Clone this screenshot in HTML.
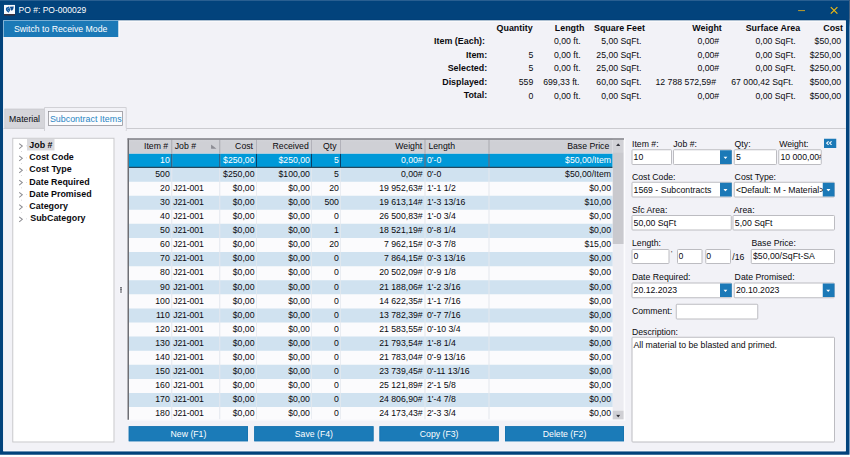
<!DOCTYPE html>
<html><head><meta charset="utf-8"><title>PO #: PO-000029</title>
<style>
html,body{margin:0;padding:0;}
body{width:850px;height:457px;overflow:hidden;background:#fff;position:relative;font-family:"Liberation Sans",sans-serif;}
#w{position:absolute;left:0;top:0;width:3400px;height:1828px;transform:scale(0.25);transform-origin:0 0;overflow:hidden;color:#0a0a0e;}
.b{position:absolute;display:block;box-sizing:border-box;}
.t{position:absolute;white-space:pre;line-height:48px;height:48px;font-family:"Liberation Sans",sans-serif;}
</style></head><body><div id="w">
<div class="b" style="left:0px;top:0px;width:3396.8px;height:1819.2px;background:#02437c;"></div>
<div class="b" style="left:0px;top:0px;width:3396.8px;height:3.6px;background:linear-gradient(#44749f,#0e4a83);"></div>
<div class="b" style="left:3396.8px;top:0px;width:3.2px;height:1818px;background:linear-gradient(#1c3c62 0,#1c3c62 4%,#5f88b4 6%,#5f88b4 100%);"></div>
<div class="b" style="left:13.2px;top:82px;width:3370px;height:1723.2px;background:#f2f2f7;border:3px solid #fcfcfe;"></div>
<svg class="b" style="left:16.4px;top:19.2px;width:44px;height:44px" viewBox="0 0 11 11"><rect x="0" y="0" width="11" height="9.6" fill="#f8f9fc"/><rect x="0" y="9.3" width="11" height="1.6" fill="#3a2a32"/><path d="M2 3.1L4.9 1.8L6.1 3.6L6 5.8L4.5 7.9L3 6.8L1.9 5.3Z" fill="#0e56a0"/><path d="M5.6 2L9.8 1.8L9.2 4.6L7.9 5.9L6.5 5.3L6.6 3.8Z" fill="#0d4d92"/><path d="M5 2L6.2 4.4M3 4.7L4.6 3.7M3.7 6.4L5.2 5.5" stroke="#e6eef7" stroke-width="0.45" fill="none"/></svg>
<span class="t" style="top:17px;font-size:34px;color:#fff;left:74.4px;">PO #: PO-000029</span>
<svg class="b" style="left:3180px;top:16px;width:200px;height:48px" viewBox="0 0 50 12"><path d="M3.1 6.6h6.9" stroke="#caa326" stroke-width="0.95" fill="none"/><path d="M35.8 3.1l6.6 6.6M42.4 3.1l-6.6 6.6" stroke="#f2bb10" stroke-width="1.15" fill="none"/></svg>
<div class="b" style="left:14px;top:78.8px;width:3368.8px;height:3.2px;background:#013a70;"></div>
<div class="b" style="left:14px;top:82px;width:3368.8px;height:4px;background:#fdfdfe;"></div>
<div class="b" style="left:473.2px;top:84px;width:5.6px;height:64.4px;background:#fbfbfd;"></div>
<div class="b" style="left:14px;top:82.4px;width:459.2px;height:65.2px;background:#1b79b7;"></div>
<div class="b" style="left:14px;top:82px;width:459.2px;height:2.4px;background:#8fc0e2;"></div>
<span class="t" style="top:92.3px;font-size:34.8px;color:#fff;left:56px;">Switch to Receive Mode</span>
<span class="t" style="top:86.5px;font-size:35.6px;font-weight:bold;right:1269.6px;">Quantity</span>
<span class="t" style="top:86.5px;font-size:35.6px;font-weight:bold;right:1062.4px;">Length</span>
<span class="t" style="top:86.5px;font-size:35.6px;font-weight:bold;left:2376px;">Square Feet</span>
<span class="t" style="top:86.5px;font-size:35.6px;font-weight:bold;right:512.8px;">Weight</span>
<span class="t" style="top:86.5px;font-size:35.6px;font-weight:bold;right:199.2px;">Surface Area</span>
<span class="t" style="top:86.5px;font-size:35.6px;font-weight:bold;right:28px;">Cost</span>
<span class="t" style="top:140.1px;font-size:35.6px;font-weight:bold;right:1460px;">Item (Each):</span>
<span class="t" style="top:140.3px;font-size:34.8px;right:1077.6px;">0,00 ft.</span>
<span class="t" style="top:140.3px;font-size:34.8px;right:834.8px;">5,00 SqFt.</span>
<span class="t" style="top:140.3px;font-size:34.8px;right:523.2px;">0,00#</span>
<span class="t" style="top:140.3px;font-size:34.8px;right:217.6px;">0,00 SqFt.</span>
<span class="t" style="top:140.3px;font-size:34.8px;right:35.2px;">$50,00</span>
<span class="t" style="top:194.5px;font-size:35.6px;font-weight:bold;right:1451.2px;">Item:</span>
<span class="t" style="top:194.7px;font-size:34.8px;right:1266.8px;">5</span>
<span class="t" style="top:194.7px;font-size:34.8px;right:1077.6px;">0,00 ft.</span>
<span class="t" style="top:194.7px;font-size:34.8px;right:834.8px;">25,00 SqFt.</span>
<span class="t" style="top:194.7px;font-size:34.8px;right:523.2px;">0,00#</span>
<span class="t" style="top:194.7px;font-size:34.8px;right:217.6px;">0,00 SqFt.</span>
<span class="t" style="top:194.7px;font-size:34.8px;right:35.2px;">$250,00</span>
<span class="t" style="top:248.5px;font-size:35.6px;font-weight:bold;right:1451.2px;">Selected:</span>
<span class="t" style="top:248.7px;font-size:34.8px;right:1266.8px;">5</span>
<span class="t" style="top:248.7px;font-size:34.8px;right:1077.6px;">0,00 ft.</span>
<span class="t" style="top:248.7px;font-size:34.8px;right:834.8px;">25,00 SqFt.</span>
<span class="t" style="top:248.7px;font-size:34.8px;right:523.2px;">0,00#</span>
<span class="t" style="top:248.7px;font-size:34.8px;right:217.6px;">0,00 SqFt.</span>
<span class="t" style="top:248.7px;font-size:34.8px;right:35.2px;">$250,00</span>
<span class="t" style="top:302.9px;font-size:35.6px;font-weight:bold;right:1451.2px;">Displayed:</span>
<span class="t" style="top:303.1px;font-size:34.8px;right:1266.8px;">559</span>
<span class="t" style="top:303.1px;font-size:34.8px;right:1082.4px;">699,33 ft.</span>
<span class="t" style="top:303.1px;font-size:34.8px;right:834.8px;">60,00 SqFt.</span>
<span class="t" style="top:303.1px;font-size:34.8px;right:536px;">12 788 572,59#</span>
<span class="t" style="top:303.1px;font-size:34.8px;right:227.6px;">67 000,42 SqFt.</span>
<span class="t" style="top:303.1px;font-size:34.8px;right:35.2px;">$500,00</span>
<span class="t" style="top:357.3px;font-size:35.6px;font-weight:bold;right:1451.2px;">Total:</span>
<span class="t" style="top:357.5px;font-size:34.8px;right:1266.8px;">0</span>
<span class="t" style="top:357.5px;font-size:34.8px;right:1077.6px;">0,00 ft.</span>
<span class="t" style="top:357.5px;font-size:34.8px;right:834.8px;">0,00 SqFt.</span>
<span class="t" style="top:357.5px;font-size:34.8px;right:523.2px;">0,00#</span>
<span class="t" style="top:357.5px;font-size:34.8px;right:217.6px;">0,00 SqFt.</span>
<span class="t" style="top:357.5px;font-size:34.8px;right:35.2px;">$500,00</span>
<div class="b" style="left:18.4px;top:435.2px;width:160.8px;height:79.2px;background:#d5d5da;border:3px solid #c9c9ce;"></div>
<div class="b" style="left:14px;top:512.4px;width:3368.8px;height:3.6px;background:#cbcbd0;"></div>
<div class="b" style="left:177.2px;top:428.8px;width:328.8px;height:95.2px;background:#f2f2f7;border:3px solid #c6c6cb;"></div>
<div class="b" style="left:180.2px;top:512px;width:322.8px;height:14px;background:#f2f2f7;"></div>
<div class="b" style="left:192.4px;top:444px;width:298.8px;height:58.8px;background:#fcfcfe;border:3px solid #8c8c92;"></div>
<span class="t" style="top:453.1px;font-size:34.8px;left:36.4px;">Material</span>
<span class="t" style="top:450.9px;font-size:35.6px;color:#2a86c4;left:199.6px;">Subcontract Items</span>
<div class="b" style="left:49.2px;top:551.2px;width:409.2px;height:1218.8px;background:#fff;border:4px solid #c6c6ca;"></div>
<div class="b" style="left:107.6px;top:556px;width:110.8px;height:45.6px;background:#d9d9dd;"></div>
<svg class="b" style="left:73.6px;top:571.2px;width:20px;height:28px" viewBox="0 0 5 7"><path d="M0.7 0.8L3.8 3.3L0.7 5.8" stroke="#8e8e93" stroke-width="1.05" fill="none"/></svg>
<div class="b" style="left:105.2px;top:582px;width:2.8px;height:2.8px;background:#c3c3c8;"></div>
<div class="b" style="left:84px;top:604px;width:2.8px;height:2.8px;background:#b9b9be;"></div>
<span class="t" style="top:555.7px;font-size:35.6px;font-weight:bold;left:117.2px;">Job #</span>
<svg class="b" style="left:73.6px;top:619.6px;width:20px;height:28px" viewBox="0 0 5 7"><path d="M0.7 0.8L3.8 3.3L0.7 5.8" stroke="#8e8e93" stroke-width="1.05" fill="none"/></svg>
<div class="b" style="left:105.2px;top:630.4px;width:2.8px;height:2.8px;background:#c3c3c8;"></div>
<div class="b" style="left:84px;top:652.4px;width:2.8px;height:2.8px;background:#b9b9be;"></div>
<span class="t" style="top:604.1px;font-size:35.6px;font-weight:bold;left:117.2px;">Cost Code</span>
<svg class="b" style="left:73.6px;top:668.4px;width:20px;height:28px" viewBox="0 0 5 7"><path d="M0.7 0.8L3.8 3.3L0.7 5.8" stroke="#8e8e93" stroke-width="1.05" fill="none"/></svg>
<div class="b" style="left:105.2px;top:679.2px;width:2.8px;height:2.8px;background:#c3c3c8;"></div>
<div class="b" style="left:84px;top:701.2px;width:2.8px;height:2.8px;background:#b9b9be;"></div>
<span class="t" style="top:652.9px;font-size:35.6px;font-weight:bold;left:117.2px;">Cost Type</span>
<svg class="b" style="left:73.6px;top:717.2px;width:20px;height:28px" viewBox="0 0 5 7"><path d="M0.7 0.8L3.8 3.3L0.7 5.8" stroke="#8e8e93" stroke-width="1.05" fill="none"/></svg>
<div class="b" style="left:105.2px;top:728px;width:2.8px;height:2.8px;background:#c3c3c8;"></div>
<div class="b" style="left:84px;top:750px;width:2.8px;height:2.8px;background:#b9b9be;"></div>
<span class="t" style="top:701.7px;font-size:35.6px;font-weight:bold;left:117.2px;">Date Required</span>
<svg class="b" style="left:73.6px;top:766px;width:20px;height:28px" viewBox="0 0 5 7"><path d="M0.7 0.8L3.8 3.3L0.7 5.8" stroke="#8e8e93" stroke-width="1.05" fill="none"/></svg>
<div class="b" style="left:105.2px;top:776.8px;width:2.8px;height:2.8px;background:#c3c3c8;"></div>
<div class="b" style="left:84px;top:798.8px;width:2.8px;height:2.8px;background:#b9b9be;"></div>
<span class="t" style="top:750.5px;font-size:35.6px;font-weight:bold;left:117.2px;">Date Promised</span>
<svg class="b" style="left:73.6px;top:814.8px;width:20px;height:28px" viewBox="0 0 5 7"><path d="M0.7 0.8L3.8 3.3L0.7 5.8" stroke="#8e8e93" stroke-width="1.05" fill="none"/></svg>
<div class="b" style="left:105.2px;top:825.6px;width:2.8px;height:2.8px;background:#c3c3c8;"></div>
<div class="b" style="left:84px;top:847.6px;width:2.8px;height:2.8px;background:#b9b9be;"></div>
<span class="t" style="top:799.3px;font-size:35.6px;font-weight:bold;left:117.2px;">Category</span>
<svg class="b" style="left:73.6px;top:863.6px;width:20px;height:28px" viewBox="0 0 5 7"><path d="M0.7 0.8L3.8 3.3L0.7 5.8" stroke="#8e8e93" stroke-width="1.05" fill="none"/></svg>
<div class="b" style="left:105.2px;top:874.4px;width:2.8px;height:2.8px;background:#c3c3c8;"></div>
<span class="t" style="top:848.1px;font-size:35.6px;font-weight:bold;left:120.8px;">SubCategory</span>
<div class="b" style="left:477.2px;top:1146px;width:14px;height:27.6px;background:#f8f8fb;"></div>
<div class="b" style="left:480px;top:1149.2px;width:8.4px;height:4.8px;background:#4e4e58;"></div>
<div class="b" style="left:480px;top:1157.4px;width:8.4px;height:4.8px;background:#4e4e58;"></div>
<div class="b" style="left:480px;top:1165.6px;width:8.4px;height:4.8px;background:#4e4e58;"></div>
<div class="b" style="left:513.2px;top:556px;width:1982px;height:1121.6px;background:#fbfbfd;"></div>
<div class="b" style="left:513.2px;top:555.2px;width:1938px;height:58.4px;background:linear-gradient(#d4d5da 0,#cfd0d5 22%,#cfd0d5 100%);"></div>
<div class="b" style="left:513.2px;top:613.6px;width:1938px;height:56.4px;background:#0099d8;"></div>
<div class="b" style="left:513.2px;top:670px;width:1938px;height:56.6px;background:#d0e2f0;"></div>
<div class="b" style="left:513.2px;top:782.7px;width:1938px;height:56.6px;background:#d0e2f0;"></div>
<div class="b" style="left:513.2px;top:895.4px;width:1938px;height:56.6px;background:#d0e2f0;"></div>
<div class="b" style="left:513.2px;top:1008.1px;width:1938px;height:56.6px;background:#d0e2f0;"></div>
<div class="b" style="left:513.2px;top:1120.8px;width:1938px;height:56.6px;background:#d0e2f0;"></div>
<div class="b" style="left:513.2px;top:1233.6px;width:1938px;height:56.6px;background:#d0e2f0;"></div>
<div class="b" style="left:513.2px;top:1346.3px;width:1938px;height:56.6px;background:#d0e2f0;"></div>
<div class="b" style="left:513.2px;top:1459px;width:1938px;height:56.6px;background:#d0e2f0;"></div>
<div class="b" style="left:513.2px;top:1571.7px;width:1938px;height:56.6px;background:#d0e2f0;"></div>
<div class="b" style="left:685.4px;top:613.6px;width:3.6px;height:1064px;background:#e4e8ee;"></div>
<div class="b" style="left:685.4px;top:558.8px;width:3.6px;height:54.8px;background:#a9a9b0;"></div>
<div class="b" style="left:685.2px;top:613.6px;width:4px;height:56.4px;background:#0a3f66;"></div>
<div class="b" style="left:877.4px;top:613.6px;width:3.6px;height:1064px;background:#e4e8ee;"></div>
<div class="b" style="left:877.4px;top:558.8px;width:3.6px;height:54.8px;background:#a9a9b0;"></div>
<div class="b" style="left:877.2px;top:613.6px;width:4px;height:56.4px;background:#0a3f66;"></div>
<div class="b" style="left:1024.6px;top:613.6px;width:3.6px;height:1064px;background:#e4e8ee;"></div>
<div class="b" style="left:1024.6px;top:558.8px;width:3.6px;height:54.8px;background:#a9a9b0;"></div>
<div class="b" style="left:1024.4px;top:613.6px;width:4px;height:56.4px;background:#0a3f66;"></div>
<div class="b" style="left:1244.6px;top:613.6px;width:3.6px;height:1064px;background:#e4e8ee;"></div>
<div class="b" style="left:1244.6px;top:558.8px;width:3.6px;height:54.8px;background:#a9a9b0;"></div>
<div class="b" style="left:1244.4px;top:613.6px;width:4px;height:56.4px;background:#0a3f66;"></div>
<div class="b" style="left:1360.6px;top:613.6px;width:3.6px;height:1064px;background:#e4e8ee;"></div>
<div class="b" style="left:1360.6px;top:558.8px;width:3.6px;height:54.8px;background:#a9a9b0;"></div>
<div class="b" style="left:1360.4px;top:613.6px;width:4px;height:56.4px;background:#0a3f66;"></div>
<div class="b" style="left:1698.2px;top:613.6px;width:3.6px;height:1064px;background:#e4e8ee;"></div>
<div class="b" style="left:1698.2px;top:558.8px;width:3.6px;height:54.8px;background:#a9a9b0;"></div>
<div class="b" style="left:1698px;top:613.6px;width:4px;height:56.4px;background:#0a3f66;"></div>
<div class="b" style="left:1954.2px;top:613.6px;width:3.6px;height:1064px;background:#e4e8ee;"></div>
<div class="b" style="left:1954.2px;top:558.8px;width:3.6px;height:54.8px;background:#a9a9b0;"></div>
<div class="b" style="left:1954px;top:613.6px;width:4px;height:56.4px;background:#0a3f66;"></div>
<div class="b" style="left:513.2px;top:611.6px;width:1938px;height:2.4px;background:#e2dadf;"></div>
<div class="b" style="left:513.2px;top:667.2px;width:1938px;height:4.8px;background:#27485c;"></div>
<span class="t" style="top:614.3px;font-size:34.8px;color:#fff;right:2720.8px;">10</span>
<span class="t" style="top:614.3px;font-size:34.8px;color:#fff;right:2382px;">$250,00</span>
<span class="t" style="top:614.3px;font-size:34.8px;color:#fff;right:2160.4px;">$250,00</span>
<span class="t" style="top:614.3px;font-size:34.8px;color:#fff;right:2044.4px;">5</span>
<span class="t" style="top:614.3px;font-size:34.8px;color:#fff;right:1709.2px;">0,00#</span>
<span class="t" style="top:614.3px;font-size:34.8px;color:#fff;left:1708px;">0'-0</span>
<span class="t" style="top:614.3px;font-size:34.8px;color:#fff;right:956px;">$50,00/Item</span>
<span class="t" style="top:670.7px;font-size:34.8px;right:2720.8px;">500</span>
<span class="t" style="top:670.7px;font-size:34.8px;right:2382px;">$250,00</span>
<span class="t" style="top:670.7px;font-size:34.8px;right:2160.4px;">$100,00</span>
<span class="t" style="top:670.7px;font-size:34.8px;right:2044.4px;">5</span>
<span class="t" style="top:670.7px;font-size:34.8px;right:1709.2px;">0,00#</span>
<span class="t" style="top:670.7px;font-size:34.8px;left:1708px;">0'-0</span>
<span class="t" style="top:670.7px;font-size:34.8px;right:956px;">$50,00/Item</span>
<span class="t" style="top:727.1px;font-size:34.8px;right:2720.8px;">20</span>
<span class="t" style="top:727.1px;font-size:34.8px;left:692.8px;letter-spacing:-0.6px;">J21-001</span>
<span class="t" style="top:727.1px;font-size:34.8px;right:2382px;">$0,00</span>
<span class="t" style="top:727.1px;font-size:34.8px;right:2160.4px;">$0,00</span>
<span class="t" style="top:727.1px;font-size:34.8px;right:2044.4px;">20</span>
<span class="t" style="top:727.1px;font-size:34.8px;right:1709.2px;">19 952,63#</span>
<span class="t" style="top:727.1px;font-size:34.8px;left:1708px;">1'-1 1/2</span>
<span class="t" style="top:727.1px;font-size:34.8px;right:956px;">$0,00</span>
<span class="t" style="top:783.4px;font-size:34.8px;right:2720.8px;">30</span>
<span class="t" style="top:783.4px;font-size:34.8px;left:692.8px;letter-spacing:-0.6px;">J21-001</span>
<span class="t" style="top:783.4px;font-size:34.8px;right:2382px;">$0,00</span>
<span class="t" style="top:783.4px;font-size:34.8px;right:2160.4px;">$0,00</span>
<span class="t" style="top:783.4px;font-size:34.8px;right:2044.4px;">500</span>
<span class="t" style="top:783.4px;font-size:34.8px;right:1709.2px;">19 613,14#</span>
<span class="t" style="top:783.4px;font-size:34.8px;left:1708px;">1'-3 13/16</span>
<span class="t" style="top:783.4px;font-size:34.8px;right:956px;">$10,00</span>
<span class="t" style="top:839.8px;font-size:34.8px;right:2720.8px;">40</span>
<span class="t" style="top:839.8px;font-size:34.8px;left:692.8px;letter-spacing:-0.6px;">J21-001</span>
<span class="t" style="top:839.8px;font-size:34.8px;right:2382px;">$0,00</span>
<span class="t" style="top:839.8px;font-size:34.8px;right:2160.4px;">$0,00</span>
<span class="t" style="top:839.8px;font-size:34.8px;right:2044.4px;">0</span>
<span class="t" style="top:839.8px;font-size:34.8px;right:1709.2px;">26 500,83#</span>
<span class="t" style="top:839.8px;font-size:34.8px;left:1708px;">1'-0 3/4</span>
<span class="t" style="top:839.8px;font-size:34.8px;right:956px;">$0,00</span>
<span class="t" style="top:896.1px;font-size:34.8px;right:2720.8px;">50</span>
<span class="t" style="top:896.1px;font-size:34.8px;left:692.8px;letter-spacing:-0.6px;">J21-001</span>
<span class="t" style="top:896.1px;font-size:34.8px;right:2382px;">$0,00</span>
<span class="t" style="top:896.1px;font-size:34.8px;right:2160.4px;">$0,00</span>
<span class="t" style="top:896.1px;font-size:34.8px;right:2044.4px;">1</span>
<span class="t" style="top:896.1px;font-size:34.8px;right:1709.2px;">18 521,19#</span>
<span class="t" style="top:896.1px;font-size:34.8px;left:1708px;">0'-8 1/4</span>
<span class="t" style="top:896.1px;font-size:34.8px;right:956px;">$0,00</span>
<span class="t" style="top:952.5px;font-size:34.8px;right:2720.8px;">60</span>
<span class="t" style="top:952.5px;font-size:34.8px;left:692.8px;letter-spacing:-0.6px;">J21-001</span>
<span class="t" style="top:952.5px;font-size:34.8px;right:2382px;">$0,00</span>
<span class="t" style="top:952.5px;font-size:34.8px;right:2160.4px;">$0,00</span>
<span class="t" style="top:952.5px;font-size:34.8px;right:2044.4px;">20</span>
<span class="t" style="top:952.5px;font-size:34.8px;right:1709.2px;">7 962,15#</span>
<span class="t" style="top:952.5px;font-size:34.8px;left:1708px;">0'-3 7/8</span>
<span class="t" style="top:952.5px;font-size:34.8px;right:956px;">$15,00</span>
<span class="t" style="top:1008.9px;font-size:34.8px;right:2720.8px;">70</span>
<span class="t" style="top:1008.9px;font-size:34.8px;left:692.8px;letter-spacing:-0.6px;">J21-001</span>
<span class="t" style="top:1008.9px;font-size:34.8px;right:2382px;">$0,00</span>
<span class="t" style="top:1008.9px;font-size:34.8px;right:2160.4px;">$0,00</span>
<span class="t" style="top:1008.9px;font-size:34.8px;right:2044.4px;">0</span>
<span class="t" style="top:1008.9px;font-size:34.8px;right:1709.2px;">7 864,15#</span>
<span class="t" style="top:1008.9px;font-size:34.8px;left:1708px;">0'-3 13/16</span>
<span class="t" style="top:1008.9px;font-size:34.8px;right:956px;">$0,00</span>
<span class="t" style="top:1065.2px;font-size:34.8px;right:2720.8px;">80</span>
<span class="t" style="top:1065.2px;font-size:34.8px;left:692.8px;letter-spacing:-0.6px;">J21-001</span>
<span class="t" style="top:1065.2px;font-size:34.8px;right:2382px;">$0,00</span>
<span class="t" style="top:1065.2px;font-size:34.8px;right:2160.4px;">$0,00</span>
<span class="t" style="top:1065.2px;font-size:34.8px;right:2044.4px;">0</span>
<span class="t" style="top:1065.2px;font-size:34.8px;right:1709.2px;">20 502,09#</span>
<span class="t" style="top:1065.2px;font-size:34.8px;left:1708px;">0'-9 1/8</span>
<span class="t" style="top:1065.2px;font-size:34.8px;right:956px;">$0,00</span>
<span class="t" style="top:1121.6px;font-size:34.8px;right:2720.8px;">90</span>
<span class="t" style="top:1121.6px;font-size:34.8px;left:692.8px;letter-spacing:-0.6px;">J21-001</span>
<span class="t" style="top:1121.6px;font-size:34.8px;right:2382px;">$0,00</span>
<span class="t" style="top:1121.6px;font-size:34.8px;right:2160.4px;">$0,00</span>
<span class="t" style="top:1121.6px;font-size:34.8px;right:2044.4px;">0</span>
<span class="t" style="top:1121.6px;font-size:34.8px;right:1709.2px;">21 188,06#</span>
<span class="t" style="top:1121.6px;font-size:34.8px;left:1708px;">1'-2 3/16</span>
<span class="t" style="top:1121.6px;font-size:34.8px;right:956px;">$0,00</span>
<span class="t" style="top:1177.9px;font-size:34.8px;right:2720.8px;">100</span>
<span class="t" style="top:1177.9px;font-size:34.8px;left:692.8px;letter-spacing:-0.6px;">J21-001</span>
<span class="t" style="top:1177.9px;font-size:34.8px;right:2382px;">$0,00</span>
<span class="t" style="top:1177.9px;font-size:34.8px;right:2160.4px;">$0,00</span>
<span class="t" style="top:1177.9px;font-size:34.8px;right:2044.4px;">0</span>
<span class="t" style="top:1177.9px;font-size:34.8px;right:1709.2px;">14 622,35#</span>
<span class="t" style="top:1177.9px;font-size:34.8px;left:1708px;">1'-1 7/16</span>
<span class="t" style="top:1177.9px;font-size:34.8px;right:956px;">$0,00</span>
<span class="t" style="top:1234.3px;font-size:34.8px;right:2720.8px;">110</span>
<span class="t" style="top:1234.3px;font-size:34.8px;left:692.8px;letter-spacing:-0.6px;">J21-001</span>
<span class="t" style="top:1234.3px;font-size:34.8px;right:2382px;">$0,00</span>
<span class="t" style="top:1234.3px;font-size:34.8px;right:2160.4px;">$0,00</span>
<span class="t" style="top:1234.3px;font-size:34.8px;right:2044.4px;">0</span>
<span class="t" style="top:1234.3px;font-size:34.8px;right:1709.2px;">13 782,39#</span>
<span class="t" style="top:1234.3px;font-size:34.8px;left:1708px;">0'-7 7/16</span>
<span class="t" style="top:1234.3px;font-size:34.8px;right:956px;">$0,00</span>
<span class="t" style="top:1290.7px;font-size:34.8px;right:2720.8px;">120</span>
<span class="t" style="top:1290.7px;font-size:34.8px;left:692.8px;letter-spacing:-0.6px;">J21-001</span>
<span class="t" style="top:1290.7px;font-size:34.8px;right:2382px;">$0,00</span>
<span class="t" style="top:1290.7px;font-size:34.8px;right:2160.4px;">$0,00</span>
<span class="t" style="top:1290.7px;font-size:34.8px;right:2044.4px;">0</span>
<span class="t" style="top:1290.7px;font-size:34.8px;right:1709.2px;">21 583,55#</span>
<span class="t" style="top:1290.7px;font-size:34.8px;left:1708px;">0'-10 3/4</span>
<span class="t" style="top:1290.7px;font-size:34.8px;right:956px;">$0,00</span>
<span class="t" style="top:1347px;font-size:34.8px;right:2720.8px;">130</span>
<span class="t" style="top:1347px;font-size:34.8px;left:692.8px;letter-spacing:-0.6px;">J21-001</span>
<span class="t" style="top:1347px;font-size:34.8px;right:2382px;">$0,00</span>
<span class="t" style="top:1347px;font-size:34.8px;right:2160.4px;">$0,00</span>
<span class="t" style="top:1347px;font-size:34.8px;right:2044.4px;">0</span>
<span class="t" style="top:1347px;font-size:34.8px;right:1709.2px;">21 793,54#</span>
<span class="t" style="top:1347px;font-size:34.8px;left:1708px;">1'-8 1/4</span>
<span class="t" style="top:1347px;font-size:34.8px;right:956px;">$0,00</span>
<span class="t" style="top:1403.4px;font-size:34.8px;right:2720.8px;">140</span>
<span class="t" style="top:1403.4px;font-size:34.8px;left:692.8px;letter-spacing:-0.6px;">J21-001</span>
<span class="t" style="top:1403.4px;font-size:34.8px;right:2382px;">$0,00</span>
<span class="t" style="top:1403.4px;font-size:34.8px;right:2160.4px;">$0,00</span>
<span class="t" style="top:1403.4px;font-size:34.8px;right:2044.4px;">0</span>
<span class="t" style="top:1403.4px;font-size:34.8px;right:1709.2px;">21 783,04#</span>
<span class="t" style="top:1403.4px;font-size:34.8px;left:1708px;">0'-9 13/16</span>
<span class="t" style="top:1403.4px;font-size:34.8px;right:956px;">$0,00</span>
<span class="t" style="top:1459.7px;font-size:34.8px;right:2720.8px;">150</span>
<span class="t" style="top:1459.7px;font-size:34.8px;left:692.8px;letter-spacing:-0.6px;">J21-001</span>
<span class="t" style="top:1459.7px;font-size:34.8px;right:2382px;">$0,00</span>
<span class="t" style="top:1459.7px;font-size:34.8px;right:2160.4px;">$0,00</span>
<span class="t" style="top:1459.7px;font-size:34.8px;right:2044.4px;">0</span>
<span class="t" style="top:1459.7px;font-size:34.8px;right:1709.2px;">23 739,45#</span>
<span class="t" style="top:1459.7px;font-size:34.8px;left:1708px;">0'-11 13/16</span>
<span class="t" style="top:1459.7px;font-size:34.8px;right:956px;">$0,00</span>
<span class="t" style="top:1516.1px;font-size:34.8px;right:2720.8px;">160</span>
<span class="t" style="top:1516.1px;font-size:34.8px;left:692.8px;letter-spacing:-0.6px;">J21-001</span>
<span class="t" style="top:1516.1px;font-size:34.8px;right:2382px;">$0,00</span>
<span class="t" style="top:1516.1px;font-size:34.8px;right:2160.4px;">$0,00</span>
<span class="t" style="top:1516.1px;font-size:34.8px;right:2044.4px;">0</span>
<span class="t" style="top:1516.1px;font-size:34.8px;right:1709.2px;">25 121,89#</span>
<span class="t" style="top:1516.1px;font-size:34.8px;left:1708px;">2'-1 5/8</span>
<span class="t" style="top:1516.1px;font-size:34.8px;right:956px;">$0,00</span>
<span class="t" style="top:1572.5px;font-size:34.8px;right:2720.8px;">170</span>
<span class="t" style="top:1572.5px;font-size:34.8px;left:692.8px;letter-spacing:-0.6px;">J21-001</span>
<span class="t" style="top:1572.5px;font-size:34.8px;right:2382px;">$0,00</span>
<span class="t" style="top:1572.5px;font-size:34.8px;right:2160.4px;">$0,00</span>
<span class="t" style="top:1572.5px;font-size:34.8px;right:2044.4px;">0</span>
<span class="t" style="top:1572.5px;font-size:34.8px;right:1709.2px;">24 806,90#</span>
<span class="t" style="top:1572.5px;font-size:34.8px;left:1708px;">1'-4 7/8</span>
<span class="t" style="top:1572.5px;font-size:34.8px;right:956px;">$0,00</span>
<span class="t" style="top:1628.8px;font-size:34.8px;right:2720.8px;">180</span>
<span class="t" style="top:1628.8px;font-size:34.8px;left:692.8px;letter-spacing:-0.6px;">J21-001</span>
<span class="t" style="top:1628.8px;font-size:34.8px;right:2382px;">$0,00</span>
<span class="t" style="top:1628.8px;font-size:34.8px;right:2160.4px;">$0,00</span>
<span class="t" style="top:1628.8px;font-size:34.8px;right:2044.4px;">0</span>
<span class="t" style="top:1628.8px;font-size:34.8px;right:1709.2px;">24 173,43#</span>
<span class="t" style="top:1628.8px;font-size:34.8px;left:1708px;">2'-3 3/4</span>
<span class="t" style="top:1628.8px;font-size:34.8px;right:956px;">$0,00</span>
<span class="t" style="top:559.9px;font-size:34.8px;right:2727.2px;">Item #</span>
<span class="t" style="top:559.9px;font-size:34.8px;left:698.8px;">Job #</span>
<span class="t" style="top:559.9px;font-size:34.8px;right:2388px;">Cost</span>
<span class="t" style="top:559.9px;font-size:34.8px;right:2164.8px;">Received</span>
<span class="t" style="top:559.9px;font-size:34.8px;left:1292px;">Qty</span>
<span class="t" style="top:559.9px;font-size:34.8px;right:1711.2px;">Weight</span>
<span class="t" style="top:559.9px;font-size:34.8px;left:1713.6px;">Length</span>
<span class="t" style="top:559.9px;font-size:34.8px;right:962.8px;">Base Price</span>
<svg class="b" style="left:843.2px;top:576.8px;width:24px;height:20px" viewBox="0 0 6 5"><path d="M0.3 0.2L0.3 4.6L5.8 4.6Z" fill="#8d8d94"/></svg>
<div class="b" style="left:2451.2px;top:558.8px;width:44px;height:1118.8px;background:#ececf1;"></div>
<div class="b" style="left:2451.2px;top:558.8px;width:44px;height:53.2px;background:#d1d1d6;"></div>
<div class="b" style="left:2451.2px;top:611.2px;width:44px;height:364.4px;background:#c9c9ce;"></div>
<div class="b" style="left:2451.2px;top:1643.2px;width:44px;height:36px;background:#cfcfd4;"></div>
<svg class="b" style="left:2464px;top:573.2px;width:17.6px;height:11.2px" viewBox="0 0 4.4 2.8"><path d="M0.1 2.7L2.2 0.1L4.3 2.7Z" fill="#34343c"/></svg>
<svg class="b" style="left:2464.4px;top:1658.4px;width:17.6px;height:12.4px" viewBox="0 0 4.4 3.1"><path d="M0.1 0.2L2.2 3L4.3 0.2Z" fill="#303038"/></svg>
<div class="b" style="left:2495.2px;top:553.6px;width:6px;height:1128.8px;background:#fcfcfe;"></div>
<div class="b" style="left:510.4px;top:1677.6px;width:1990.8px;height:4.8px;background:#fcfcfe;"></div>
<div class="b" style="left:510.4px;top:553.6px;width:6px;height:1125.6px;background:#6e6e74;"></div>
<div class="b" style="left:510.4px;top:553.2px;width:1986px;height:5.4px;background:#808086;"></div>
<div class="b" style="left:515.2px;top:1704.8px;width:477.2px;height:60.4px;background:#1b7bb8;border:3px solid #1672ae;"></div>
<span class="t" style="top:1711.5px;font-size:34.8px;color:#fff;left:353.8px;width:800px;text-align:center;">New (F1)</span>
<div class="b" style="left:1016.8px;top:1704.8px;width:477.2px;height:60.4px;background:#1b7bb8;border:3px solid #1672ae;"></div>
<span class="t" style="top:1711.5px;font-size:34.8px;color:#fff;left:855.4px;width:800px;text-align:center;">Save (F4)</span>
<div class="b" style="left:1518px;top:1704.8px;width:477.2px;height:60.4px;background:#1b7bb8;border:3px solid #1672ae;"></div>
<span class="t" style="top:1711.5px;font-size:34.8px;color:#fff;left:1356.6px;width:800px;text-align:center;">Copy (F3)</span>
<div class="b" style="left:2020.4px;top:1704.8px;width:475.6px;height:60.4px;background:#1b7bb8;border:3px solid #1672ae;"></div>
<span class="t" style="top:1711.5px;font-size:34.8px;color:#fff;left:1858.2px;width:800px;text-align:center;">Delete (F2)</span>
<span class="t" style="top:549.9px;font-size:34.8px;left:2528px;">Item #:</span>
<span class="t" style="top:549.9px;font-size:34.8px;left:2692.8px;">Job #:</span>
<span class="t" style="top:549.9px;font-size:34.8px;left:2938.4px;">Qty:</span>
<span class="t" style="top:549.9px;font-size:34.8px;left:3116.8px;">Weight:</span>
<div class="b" style="left:3296px;top:554.8px;width:48.8px;height:37.2px;background:#1b79b7;"></div>
<svg class="b" style="left:3304px;top:564px;width:25.6px;height:16.8px" viewBox="0 0 6.4 4.2"><path d="M2.6 0.4L0.6 2.1L2.6 3.8M5.6 0.4L3.6 2.1L5.6 3.8" stroke="#fff" stroke-width="1.1" fill="none"/></svg>
<div class="b" style="left:2525.6px;top:596.8px;width:162.4px;height:63.2px;background:#fff;border:4px solid #bcbcc1;border-radius:5.2px;"></div>
<span class="t" style="top:603.5px;font-size:34.8px;left:2534.4px;width:149.2px;overflow:hidden;">10</span>
<div class="b" style="left:2691.6px;top:596.8px;width:236px;height:63.2px;background:#fff;border:4px solid #bcbcc1;border-radius:5.2px;"></div>
<div class="b" style="left:2879.6px;top:600.8px;width:47px;height:54.8px;background:#1b79b7;"></div>
<svg class="b" style="left:2893.2px;top:625.6px;width:17.6px;height:10.4px" viewBox="0 0 4.4 2.6"><path d="M0.1 0.1L2.2 2.5L4.3 0.1Z" fill="#fff"/></svg>
<div class="b" style="left:2935.2px;top:596.8px;width:172.8px;height:63.2px;background:#fff;border:4px solid #bcbcc1;border-radius:5.2px;"></div>
<span class="t" style="top:603.5px;font-size:34.8px;left:2944px;width:159.6px;overflow:hidden;">5</span>
<div class="b" style="left:3112.8px;top:596.8px;width:174.4px;height:63.2px;background:#fff;border:4px solid #bcbcc1;border-radius:5.2px;"></div>
<span class="t" style="top:603.5px;font-size:34.8px;left:3121.6px;width:161.2px;overflow:hidden;">10 000,00#</span>
<span class="t" style="top:683.5px;font-size:34.8px;left:2528px;">Cost Code:</span>
<span class="t" style="top:683.5px;font-size:34.8px;left:2938.4px;">Cost Type:</span>
<div class="b" style="left:2525.6px;top:727.2px;width:402px;height:63.2px;background:#fff;border:4px solid #bcbcc1;border-radius:5.2px;"></div>
<span class="t" style="top:733.9px;font-size:34.8px;left:2534.4px;width:346.4px;overflow:hidden;">1569 - Subcontracts</span>
<div class="b" style="left:2879.6px;top:731.2px;width:47px;height:54.8px;background:#1b79b7;"></div>
<svg class="b" style="left:2893.2px;top:756px;width:17.6px;height:10.4px" viewBox="0 0 4.4 2.6"><path d="M0.1 0.1L2.2 2.5L4.3 0.1Z" fill="#fff"/></svg>
<div class="b" style="left:2934.8px;top:727.2px;width:404.4px;height:63.2px;background:#fff;border:4px solid #bcbcc1;border-radius:5.2px;"></div>
<span class="t" style="top:733.9px;font-size:34.8px;left:2943.6px;width:348.8px;overflow:hidden;">&lt;Default: M - Material&gt;</span>
<div class="b" style="left:3291.2px;top:731.2px;width:47px;height:54.8px;background:#1b79b7;"></div>
<svg class="b" style="left:3304.8px;top:756px;width:17.6px;height:10.4px" viewBox="0 0 4.4 2.6"><path d="M0.1 0.1L2.2 2.5L4.3 0.1Z" fill="#fff"/></svg>
<span class="t" style="top:813.9px;font-size:34.8px;left:2528px;">Sfc Area:</span>
<span class="t" style="top:813.9px;font-size:34.8px;left:2935.2px;">Area:</span>
<div class="b" style="left:2525.6px;top:860.4px;width:401.6px;height:61.2px;background:#fff;border:4px solid #bcbcc1;border-radius:5.2px;"></div>
<span class="t" style="top:867.1px;font-size:34.8px;left:2534.4px;width:388.4px;overflow:hidden;">50,00 SqFt</span>
<div class="b" style="left:2930.4px;top:860.4px;width:409.6px;height:61.2px;background:#fff;border:4px solid #bcbcc1;border-radius:5.2px;"></div>
<span class="t" style="top:867.1px;font-size:34.8px;left:2939.2px;width:396.4px;overflow:hidden;">5,00 SqFt</span>
<span class="t" style="top:946.7px;font-size:34.8px;left:2528px;">Length:</span>
<span class="t" style="top:946.7px;font-size:34.8px;left:3005.6px;">Base Price:</span>
<div class="b" style="left:2525.6px;top:996.4px;width:152px;height:59.2px;background:#fff;border:4px solid #bcbcc1;border-radius:5.2px;"></div>
<span class="t" style="top:999.9px;font-size:34.8px;left:2534.4px;width:138.8px;overflow:hidden;">0</span>
<span class="t" style="top:990.3px;font-size:28px;left:2684px;">'</span>
<div class="b" style="left:2708.4px;top:996.4px;width:102px;height:59.2px;background:#fff;border:4px solid #bcbcc1;border-radius:5.2px;"></div>
<span class="t" style="top:999.9px;font-size:34.8px;left:2714px;width:88.8px;overflow:hidden;">0</span>
<div class="b" style="left:2821.2px;top:996.4px;width:102.4px;height:59.2px;background:#fff;border:4px solid #bcbcc1;border-radius:5.2px;"></div>
<span class="t" style="top:999.9px;font-size:34.8px;left:2825.2px;width:89.2px;overflow:hidden;">0</span>
<span class="t" style="top:1004.7px;font-size:34.8px;left:2929.2px;">/16</span>
<div class="b" style="left:3003.2px;top:996.4px;width:336.8px;height:59.2px;background:#fff;border:4px solid #bcbcc1;border-radius:5.2px;"></div>
<span class="t" style="top:999.9px;font-size:34.8px;left:3012px;width:323.6px;overflow:hidden;">$50,00/SqFt-SA</span>
<span class="t" style="top:1083.1px;font-size:34.8px;left:2528px;">Date Required:</span>
<span class="t" style="top:1083.1px;font-size:34.8px;left:2938.4px;">Date Promised:</span>
<div class="b" style="left:2525.6px;top:1129.6px;width:402px;height:63.2px;background:#fff;border:4px solid #bcbcc1;border-radius:5.2px;"></div>
<span class="t" style="top:1136.3px;font-size:34.8px;left:2534.4px;width:346.4px;overflow:hidden;">20.12.2023</span>
<div class="b" style="left:2879.6px;top:1133.6px;width:47px;height:54.8px;background:#1b79b7;"></div>
<svg class="b" style="left:2893.2px;top:1158.4px;width:17.6px;height:10.4px" viewBox="0 0 4.4 2.6"><path d="M0.1 0.1L2.2 2.5L4.3 0.1Z" fill="#fff"/></svg>
<div class="b" style="left:2934.8px;top:1129.6px;width:404px;height:63.2px;background:#fff;border:4px solid #bcbcc1;border-radius:5.2px;"></div>
<span class="t" style="top:1136.3px;font-size:34.8px;left:2943.6px;width:348.4px;overflow:hidden;">20.10.2023</span>
<div class="b" style="left:3290.8px;top:1133.6px;width:47px;height:54.8px;background:#1b79b7;"></div>
<svg class="b" style="left:3304.4px;top:1158.4px;width:17.6px;height:10.4px" viewBox="0 0 4.4 2.6"><path d="M0.1 0.1L2.2 2.5L4.3 0.1Z" fill="#fff"/></svg>
<span class="t" style="top:1219.1px;font-size:34.8px;left:2528px;">Comment:</span>
<div class="b" style="left:2702.8px;top:1214.8px;width:330px;height:63.2px;background:#fff;border:4px solid #bcbcc1;border-radius:5.2px;"></div>
<span class="t" style="top:1301.5px;font-size:34.8px;left:2528px;">Description:</span>
<div class="b" style="left:2525.6px;top:1346.8px;width:814.4px;height:422.8px;background:#fff;border:4px solid #bcbcc1;border-radius:5.2px;"></div>
<span class="t" style="top:1353.9px;font-size:34.8px;left:2533.6px;">All material to be blasted and primed.</span>
</div></body></html>
